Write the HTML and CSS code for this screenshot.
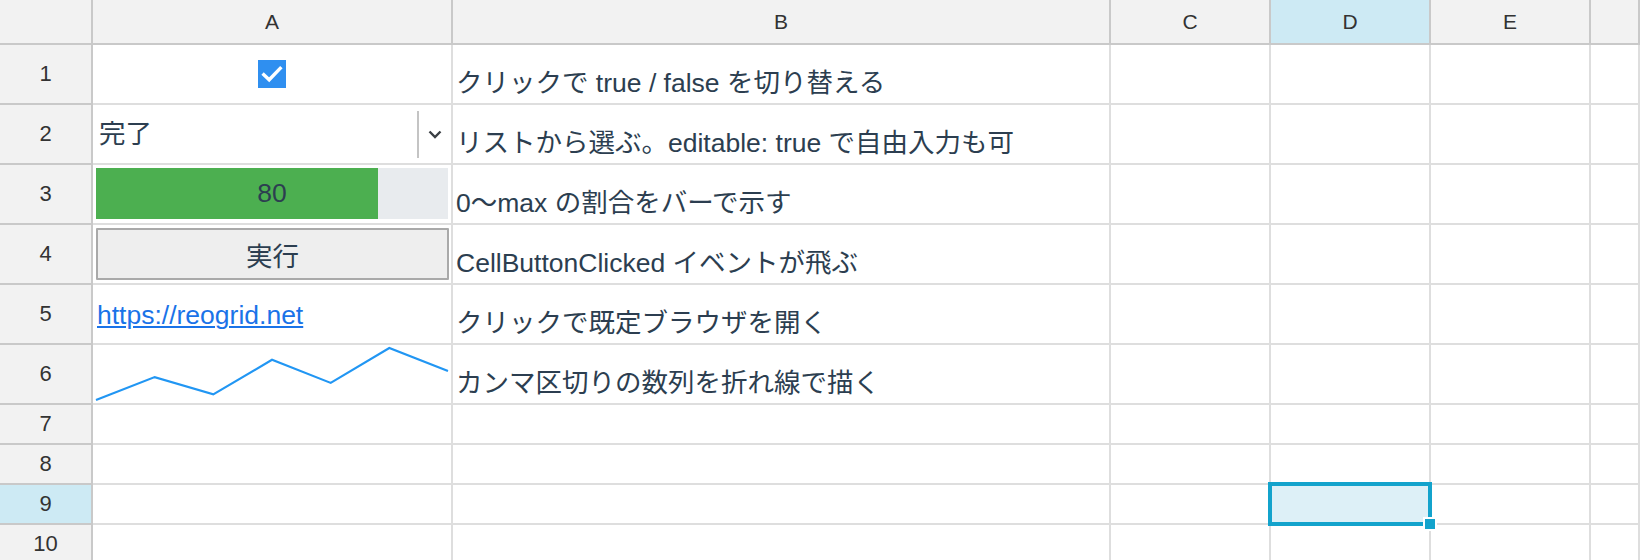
FILE: index.html
```html
<!DOCTYPE html>
<html lang="ja">
<head>
<meta charset="utf-8">
<title>ReoGrid cell types</title>
<link rel="stylesheet" href="styles.css">
</head>
<body>
<div class="sheet">
  <div class="hd corner"></div>
  <div class="hd col">A</div>
  <div class="hd col">B</div>
  <div class="hd col">C</div>
  <div class="hd col sel">D</div>
  <div class="hd col">E</div>
  <div class="hd col"></div>

  <div class="hd row">1</div>
  <div class="c center"><span class="check"><svg viewBox="0 0 28 28" width="28" height="28"><path d="M5.8 14.6 L11.2 19.8 L22.2 8.4" fill="none" stroke="#fff" stroke-width="3.4" stroke-linecap="square"/></svg></span></div>
  <div class="c txt">クリックで true / false を切り替える</div>
  <div class="c"></div><div class="c"></div><div class="c"></div><div class="c"></div>

  <div class="hd row">2</div>
  <div class="c drop"><span class="drop-val">完了</span><span class="drop-sep"></span><span class="drop-btn"><svg viewBox="0 0 14 9" width="14" height="9"><path d="M1.5 1.5 L7 7 L12.5 1.5" fill="none" stroke="#3a3f44" stroke-width="2.4"/></svg></span></div>
  <div class="c txt">リストから選ぶ。editable: true で自由入力も可</div>
  <div class="c"></div><div class="c"></div><div class="c"></div><div class="c"></div>

  <div class="hd row">3</div>
  <div class="c pad"><div class="bar"><div class="bar-fill" style="width:80%"></div><span class="bar-val">80</span></div></div>
  <div class="c txt">0〜max の割合をバーで示す</div>
  <div class="c"></div><div class="c"></div><div class="c"></div><div class="c"></div>

  <div class="hd row">4</div>
  <div class="c pad"><button class="btn">実行</button></div>
  <div class="c txt">CellButtonClicked イベントが飛ぶ</div>
  <div class="c"></div><div class="c"></div><div class="c"></div><div class="c"></div>

  <div class="hd row">5</div>
  <div class="c link-cell"><a class="link" href="https://reogrid.net">https://reogrid.net</a></div>
  <div class="c txt">クリックで既定ブラウザを開く</div>
  <div class="c"></div><div class="c"></div><div class="c"></div><div class="c"></div>

  <div class="hd row">6</div>
  <div class="c"><svg class="spark" viewBox="0 0 358 58" width="358" height="58"><polyline points="3,55 61.7,32.1 120.3,49.4 179,14.8 237.7,37.9 296.3,3 355,26.1" fill="none" stroke="#2196f3" stroke-width="2.2" stroke-linejoin="miter"/></svg></div>
  <div class="c txt">カンマ区切りの数列を折れ線で描く</div>
  <div class="c"></div><div class="c"></div><div class="c"></div><div class="c"></div>

  <div class="hd row">7</div>
  <div class="c"></div><div class="c"></div><div class="c"></div><div class="c"></div><div class="c"></div><div class="c"></div>

  <div class="hd row">8</div>
  <div class="c"></div><div class="c"></div><div class="c"></div><div class="c"></div><div class="c"></div><div class="c"></div>

  <div class="hd row sel">9</div>
  <div class="c"></div><div class="c"></div><div class="c"></div>
  <div class="c active"><div class="sel-box"></div><div class="sel-handle"></div></div>
  <div class="c"></div><div class="c"></div>

  <div class="hd row">10</div>
  <div class="c"></div><div class="c"></div><div class="c"></div><div class="c"></div><div class="c"></div><div class="c"></div>
</div>
</body>
</html>
```

FILE: styles.css
```css
html, body {
  margin: 0;
  padding: 0;
  background: #ffffff;
}

body {
  font-family: "Liberation Sans", "Noto Sans CJK JP", sans-serif;
  color: #2c3e50;
  overflow: hidden;
}

.sheet {
  display: grid;
  grid-template-columns: 93px 360px 658px 160px 160px 160px 1fr;
  grid-template-rows: 45px repeat(6, 60px) repeat(4, 40px);
  width: 1640px;
}

.hd {
  box-sizing: border-box;
  background: #f2f2f2;
  border-right: 2px solid #c9c9c9;
  border-bottom: 2px solid #c9c9c9;
  color: #333333;
  display: flex;
  align-items: center;
  justify-content: center;
}

.hd.col {
  font-size: 21px;
}

.hd.row {
  font-size: 22px;
}

.hd.sel {
  background: #cdeaf4;
}

.c {
  box-sizing: border-box;
  border-right: 2px solid #dedede;
  border-bottom: 2px solid #dedede;
  position: relative;
  min-width: 0;
}

.center {
  display: flex;
  align-items: center;
  justify-content: center;
}

.txt {
  display: flex;
  align-items: flex-end;
  padding: 0 3px 5px 3px;
  font-size: 26.5px;
  line-height: 30px;
  white-space: nowrap;
}

.check {
  width: 28px;
  height: 28px;
  background: #2f8ff0;
  display: block;
}

.check svg {
  display: block;
}

.drop {
  display: flex;
  align-items: center;
}

.drop-val {
  flex: 1;
  padding-left: 6px;
  font-size: 26.5px;
  line-height: 30px;
}

.drop-sep {
  width: 2px;
  height: 47px;
  background: #c4c4c4;
}

.drop-btn {
  width: 32px;
  display: flex;
  align-items: center;
  justify-content: center;
}

.drop-btn svg {
  display: block;
}

.pad {
  padding: 3px 3px 4px 3px;
}

.bar {
  position: relative;
  height: 51px;
  background: #e8ebee;
  display: flex;
  align-items: center;
  justify-content: center;
}

.bar-fill {
  position: absolute;
  left: 0;
  top: 0;
  bottom: 0;
  background: #4caf50;
}

.bar-val {
  position: relative;
  font-size: 26.5px;
}

.btn {
  box-sizing: border-box;
  width: 353px;
  height: 52px;
  margin: 0;
  padding: 0;
  background: #eeeeee;
  border: 2px solid #a9a9a9;
  border-radius: 1px;
  font-family: "Liberation Sans", "Noto Sans CJK JP", sans-serif;
  font-size: 26.5px;
  color: #2c3e50;
  display: block;
}

.link-cell {
  display: flex;
  align-items: center;
  padding-left: 4px;
  padding-top: 2px;
}

.link {
  color: #1a73e8;
  font-size: 26.5px;
  text-decoration: underline;
  text-decoration-thickness: 2px;
  text-underline-offset: 2px;
}

.spark {
  display: block;
}

.active {
  background: #ddf0f7;
}

.sel-box {
  position: absolute;
  left: -3px;
  top: -3px;
  width: 164px;
  height: 44px;
  box-sizing: border-box;
  border: 4px solid #13a3cc;
  z-index: 2;
}

.sel-handle {
  position: absolute;
  left: 152px;
  top: 32px;
  width: 10px;
  height: 10px;
  background: #13a3cc;
  border: 2px solid #ffffff;
  z-index: 3;
}
```
